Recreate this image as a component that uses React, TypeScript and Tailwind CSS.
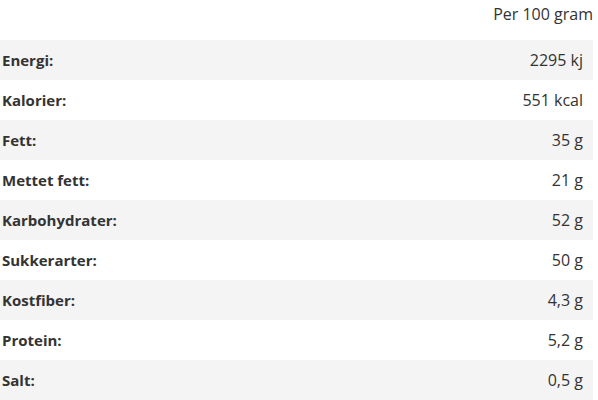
import React from "react";

const rows: [string, string][] = [
  ["Energi:", "2295 kj"],
  ["Kalorier:", "551 kcal"],
  ["Fett:", "35 g"],
  ["Mettet fett:", "21 g"],
  ["Karbohydrater:", "52 g"],
  ["Sukkerarter:", "50 g"],
  ["Kostfiber:", "4,3 g"],
  ["Protein:", "5,2 g"],
  ["Salt:", "0,5 g"],
];

export default function App() {
  return (
    <div className="w-[598px] h-[400px] bg-white text-[#333] text-[15px]" style={{ fontFamily: "'Open Sans', sans-serif" }}>
      <div className="w-[593px]">
        <div className="h-10 flex justify-end pt-[4px] leading-5 text-[16px]">Per 100 gram</div>
        {rows.map(([k, v], i) => (
          <div key={k} className={`h-10 flex items-center justify-between ${i % 2 === 0 ? "bg-[#f4f4f4]" : "bg-white"}`}>
            <span className="font-bold pl-[2px]">{k}</span>
            <span className="pr-[10px] text-[16px]">{v}</span>
          </div>
        ))}
      </div>
    </div>
  );
}
